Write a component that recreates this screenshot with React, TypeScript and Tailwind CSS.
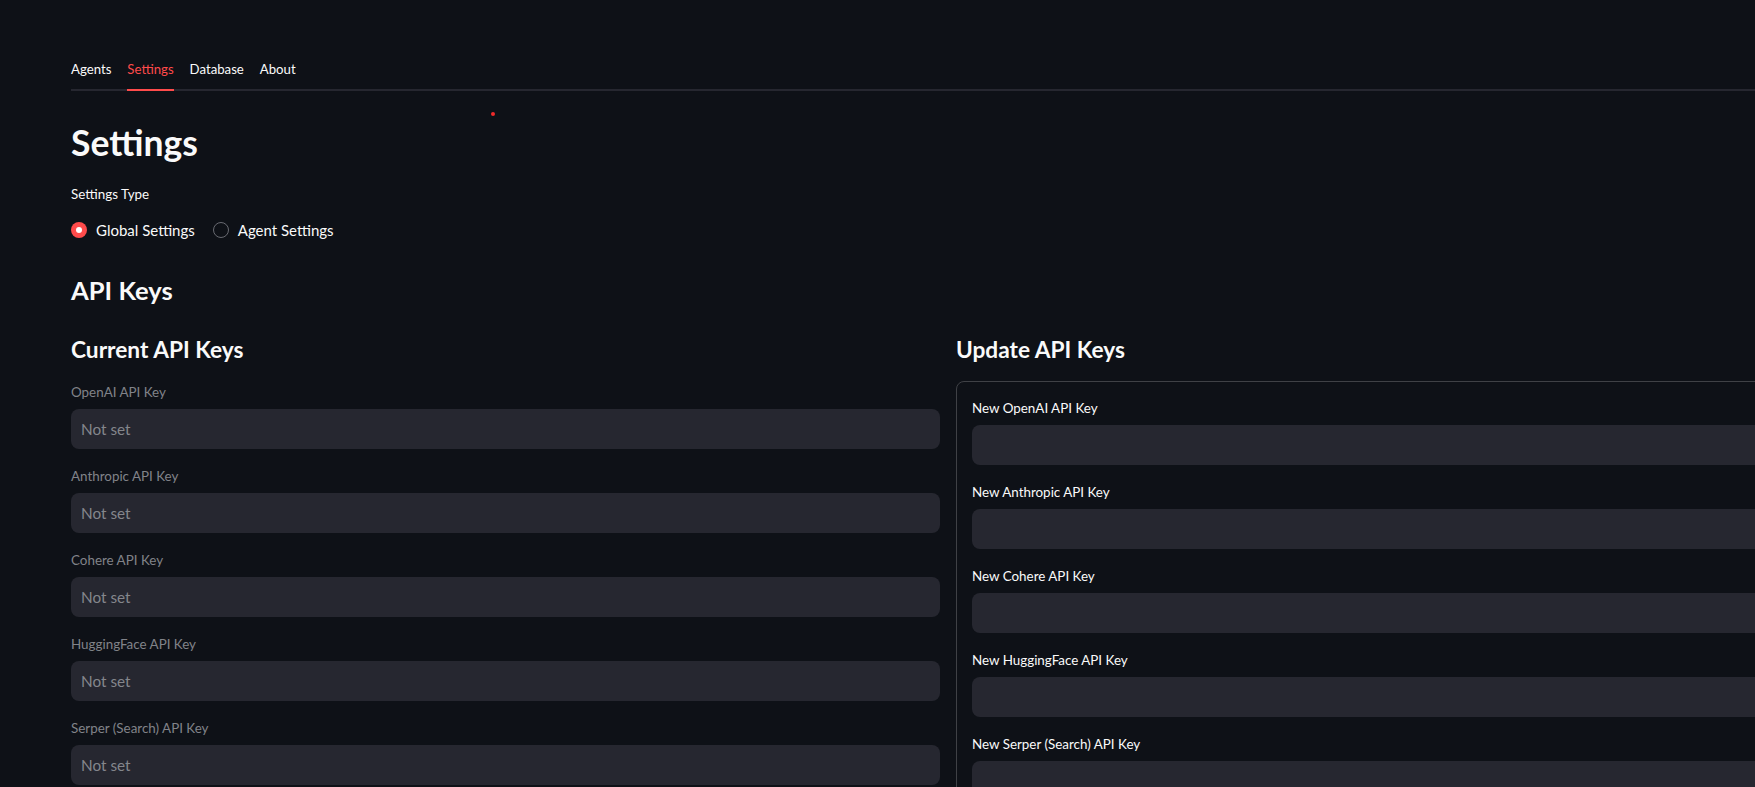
import React from "react";

const fields = [
  { cur: "OpenAI API Key", upd: "New OpenAI API Key" },
  { cur: "Anthropic API Key", upd: "New Anthropic API Key" },
  { cur: "Cohere API Key", upd: "New Cohere API Key" },
  { cur: "HuggingFace API Key", upd: "New HuggingFace API Key" },
  { cur: "Serper (Search) API Key", upd: "New Serper (Search) API Key" },
];

export default function App() {
  return (
    <div className="relative w-[1755px] h-[787px] overflow-hidden bg-[#0e1117] text-[#fafafa] font-['Lato',sans-serif]">
      {/* status dot */}
      <div className="absolute left-[491px] top-[112px] w-[4px] h-[4px] rounded-full bg-[#f02b2b]" />

      <div className="pl-[71px] w-[1825px]">
        {/* Tabs */}
        <div className="mt-[59px] flex gap-4 border-b-2 border-[#262730] text-[13.2px] leading-[20px]">
          <div className="pb-[10px]">Agents</div>
          <div className="relative pb-[10px] text-[#ff4b4b]">
            Settings
            <div className="absolute left-0 right-0 -bottom-[2px] h-[2px] bg-[#ff4b4b]" />
          </div>
          <div className="pb-[10px]">Database</div>
          <div className="pb-[10px]">About</div>
        </div>

        <h1 className="mt-[30px] text-[35.5px] leading-[44px] font-bold">Settings</h1>

        <div className="mt-[19px] text-[13.4px] leading-[20px]">Settings Type</div>

        <div className="mt-[14px] flex items-center h-[24px] text-[15px] leading-[24px]">
          <div className="flex items-center">
            <div className="w-[16px] h-[16px] rounded-full bg-[#ff4b4b] flex items-center justify-center">
              <div className="w-[6px] h-[6px] rounded-full bg-white" />
            </div>
            <span className="ml-[9px]">Global Settings</span>
          </div>
          <div className="flex items-center ml-[18px]">
            <div className="w-[16px] h-[16px] rounded-full border border-[#686a71]" />
            <span className="ml-[9px]">Agent Settings</span>
          </div>
        </div>

        <h2 className="mt-[31.5px] text-[25.6px] leading-[32px] font-bold">API Keys</h2>

        <div className="mt-[30px] grid grid-cols-[869px_869px] gap-4">
          {/* Left column */}
          <div>
            <h3 className="text-[22.7px] leading-[28px] font-bold">Current API Keys</h3>
            <div className="mt-[18.5px] flex flex-col gap-[17px]">
              {fields.map((f) => (
                <div key={f.cur}>
                  <div className="text-[13.4px] leading-[20px] text-[#818389]">{f.cur}</div>
                  <div className="mt-[7px] h-[40px] rounded-lg bg-[#262730] flex items-center pl-[10px] text-[15.3px] text-[#84868c]">
                    Not set
                  </div>
                </div>
              ))}
            </div>
          </div>

          {/* Right column */}
          <div>
            <h3 className="text-[22.7px] leading-[28px] font-bold">Update API Keys</h3>
            <div className="mt-[17px] rounded-lg border border-[#3f4146] pt-[16px] px-[15px] pb-[16px]">
              <div className="flex flex-col gap-[17px]">
                {fields.map((f) => (
                  <div key={f.upd}>
                    <div className="text-[13.4px] leading-[20px] text-[#fafafa]">{f.upd}</div>
                    <div className="mt-[7px] h-[40px] rounded-lg bg-[#262730]" />
                  </div>
                ))}
              </div>
            </div>
          </div>
        </div>
      </div>
    </div>
  );
}
